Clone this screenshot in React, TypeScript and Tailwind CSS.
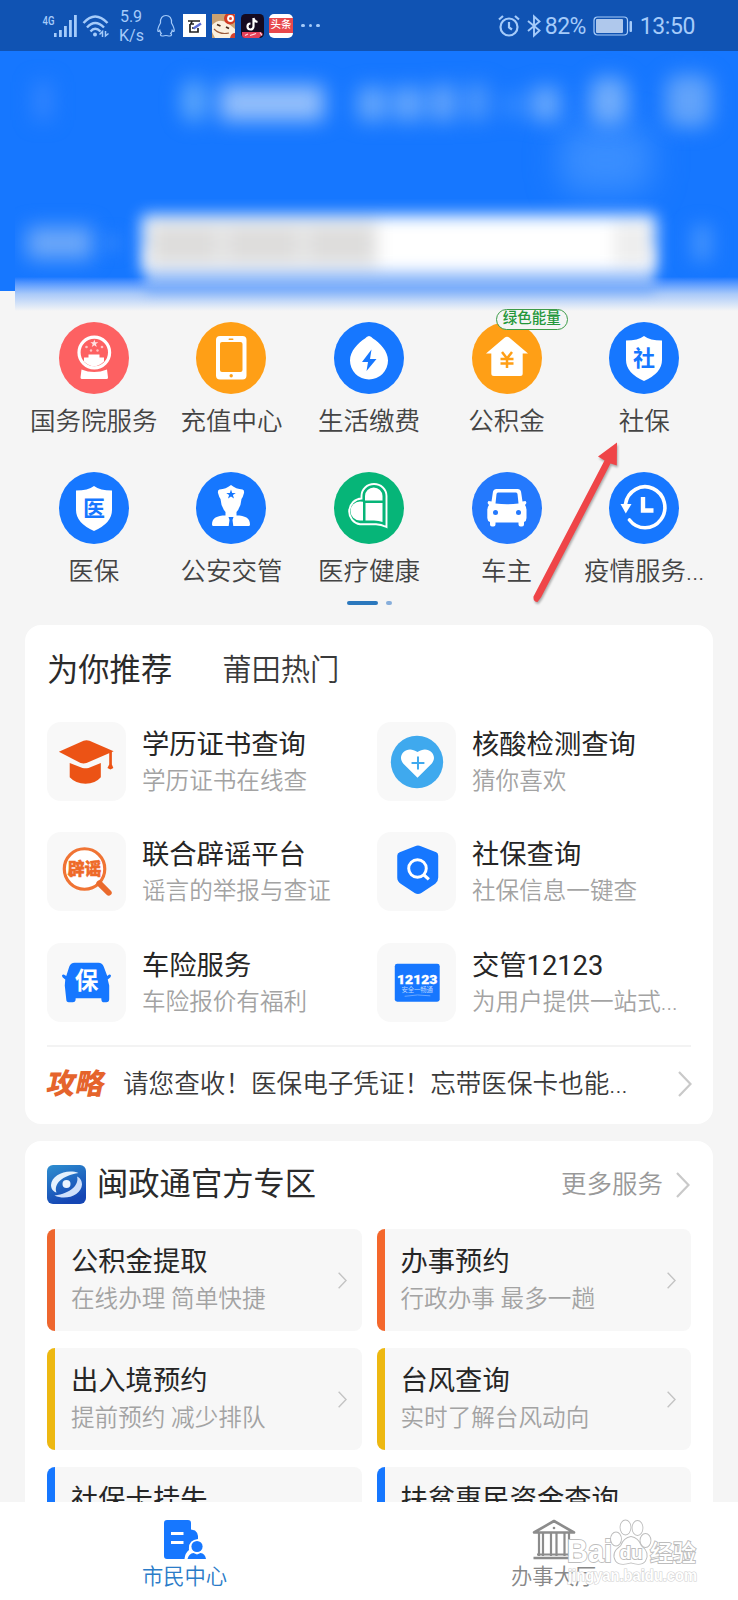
import type { ReactNode } from "react";
import clsx from "clsx";

const BLUE = "#1677ff";

/* ---------- status bar ---------- */

function StatusBar() {
  return (
    <div className="flex h-[51px] shrink-0 items-center bg-[#1053b3] font-['Roboto','Noto_Sans_CJK_SC',sans-serif] text-[#a5cbfa]">
      <svg className="ml-[42px] h-[24px] w-[36px] shrink-0 overflow-visible" viewBox="0 0 36 24" fill="currentColor">
        <text x="0.500" y="11" fontSize="13" fontWeight="500" textLength="12" lengthAdjust="spacingAndGlyphs">
          4G
        </text>
        <rect x="12" y="19" width="2.6" height="4" />
        <rect x="17" y="16" width="2.8" height="7" />
        <rect x="22" y="12" width="2.8" height="11" />
        <rect x="27" y="6" width="2.8" height="17" />
        <rect x="32" y="1" width="2.8" height="22" />
      </svg>
      <svg className="ml-[4px] h-[24px] w-[28px] shrink-0" viewBox="0 0 28 24" fill="none" stroke="currentColor" strokeWidth="2.4">
        <path d="M1.500 9Q13-4 25.500 9" />
        <path d="M5 13.500Q13 4.500 22 13.500" />
        <path d="M8.500 17.500Q13 12 18.500 17.500" />
        <circle cx="13" cy="20.500" r="2" fill="currentColor" stroke="none" />
        <path d="M17.500 20.500 20.500 17.500V23M26.500 19.500 23.500 22V17" strokeWidth="1.500" />
      </svg>
      <div className="ml-[9px] w-[24px] text-center text-[16px] leading-[19px] font-normal">
        <div>5.9</div>
        <div>K/s</div>
      </div>
      <svg className="ml-[13px] h-[24px] w-[20px] shrink-0" viewBox="0 0 20 24" fill="none" stroke="currentColor" strokeWidth="1.200">
        <path d="M4.500 9C4 4 6.500 1.500 10 1.500S16 4 15.500 9c1.500 2.500 3 5 2.700 8-.5 1-1.500 0-2-.7-.3 1.500-.8 2.400-1.500 3.200 1.500.8 1 2.500-1 2.500-1.500 0-2.500-.5-3.700-.5s-2.200.5-3.700.5c-2 0-2.500-1.700-1-2.500-.7-.8-1.200-1.700-1.500-3.200-.5.7-1.500 1.700-2 .7-.3-3 1.200-5.500 2.700-8Z" />
      </svg>
      <div className="ml-[7px] flex h-[23px] w-[23px] shrink-0 items-center justify-center bg-white">
        <svg className="h-[14px] w-[15px]" viewBox="0 0 15 14" fill="none" stroke="#222" strokeWidth="1.700">
          <path d="M1 2h12M5 2 4 5M3 5v8h8V9M3 5h4M5 9h3" />
          <path d="M6.500 9.500 14 4.500" stroke="#5d6fd8" strokeWidth="2.500" />
        </svg>
      </div>
      <svg className="ml-[6px] h-[24px] w-[23px] shrink-0" viewBox="0 0 23 24">
        <rect width="23" height="24" fill="#c9a172" />
        <path d="M0 11Q8 3 17 10l6 5v9H3L0 18Z" fill="#fbf1df" />
        <circle cx="18" cy="4.500" r="6" fill="#d33d24" />
        <circle cx="18.500" cy="4.500" r="3.400" fill="#fff" />
        <circle cx="18.500" cy="4.500" r="1.500" fill="#e0452e" />
        <path d="M5 10.500 8.500 12M14 13l3 1.500" stroke="#4b2d1b" strokeWidth="1.800" />
        <path d="M2 15Q8 21 17 19" stroke="#9b5c3c" strokeWidth="1.200" fill="none" />
        <path d="M18 24q1-5 5-5v5Z" fill="#d8432c" />
      </svg>
      <svg className="ml-[6px] h-[24px] w-[23px] shrink-0" viewBox="0 0 23 24">
        <rect width="23" height="24" rx="4.500" fill="#150a20" />
        <path d="M12.500 4v8.500a3 3 0 1 1-3-3M12.500 4q.5 3.500 4 4" fill="none" stroke="#fff" strokeWidth="2.200" />
        <path d="M1 18h19l2 2-4 4H4q-3 0-3-3Z" fill="#e4405a" />
        <path d="M4 21.500l3-1.500M9 21.500l6-2M19 18.500l2 3" stroke="#ffd9df" strokeWidth="1.200" />
      </svg>
      <div className="ml-[5px] flex h-[24px] w-[24px] shrink-0 items-center justify-center rounded-[5px] bg-white">
        <div className="flex h-[15px] w-full items-center justify-center bg-[#e8484c] text-[10.5px] leading-none font-medium text-white">
          头条
        </div>
      </div>
      <div className="ml-[8px] flex gap-[4px]">
        <i className="h-[3.500px] w-[3.500px] rounded-full bg-[#a5cbfa]" />
        <i className="h-[3.500px] w-[3.500px] rounded-full bg-[#a5cbfa]" />
        <i className="h-[3.500px] w-[3.500px] rounded-full bg-[#a5cbfa]" />
      </div>

      <div className="ml-auto flex items-center pr-[43px]">
        <svg className="h-[24px] w-[22px]" viewBox="0 0 22 24" fill="none" stroke="currentColor" strokeWidth="2.200">
          <circle cx="11" cy="13" r="8.500" />
          <path d="M11 8v5.500l3 2M1 5.500 5 2M21 5.500 17 2" />
        </svg>
        <svg className="ml-[7px] h-[24px] w-[14px]" viewBox="0 0 14 24" fill="none" stroke="currentColor" strokeWidth="1.900">
          <path d="M1 7 12.500 16.500 7 21.500V2.500L12.500 7.500 1 17" />
        </svg>
        <span className="mt-[2px] ml-[4px] w-[42px] text-[23px] leading-none tracking-[-0.5px]">82%</span>
        <svg className="ml-[6px] h-[20px] w-[40px]" viewBox="0 0 40 20">
          <rect x="1" y="1" width="33.500" height="18" rx="3.500" fill="none" stroke="currentColor" strokeWidth="1.200" />
          <rect x="3" y="3" width="27" height="14" rx="1" fill="#afc8ec" />
          <rect x="36.500" y="5" width="2.500" height="11" rx="1" fill="currentColor" />
        </svg>
        <span className="mt-[2px] ml-[7px] text-[23px] leading-none tracking-[-0.4px]">13:50</span>
      </div>
    </div>
  );
}

/* ---------- frosted header ---------- */

function Header() {
  return (
    <header className="relative h-[240px] shrink-0 bg-[#1677ff]">
      <div className="absolute top-[76px] left-[560px] h-[66px] w-[92px] rounded-[20px] bg-[#3a8eff] blur-[16px]" />
      <div className="relative flex h-[100px] items-center blur-[10px]">
        <i className="ml-[34px] h-[38px] w-[18px] bg-[#3486ff]" />
        <i className="ml-[130px] h-[42px] w-[24px] rounded-full bg-[#5fa8fb]" />
        <i className="ml-[14px] mt-[4px] h-[36px] w-[104px] bg-[#94bffb]" />
        <i className="ml-[34px] mt-[6px] h-[34px] w-[28px] bg-[#66a7fc]" />
        <i className="ml-[8px] mt-[6px] h-[34px] w-[28px] bg-[#66a7fc]" />
        <i className="ml-[8px] mt-[4px] h-[36px] w-[26px] bg-[#62a3fb]" />
        <i className="ml-[10px] mt-[2px] h-[36px] w-[22px] bg-[#4f98fb]" />
        <i className="ml-[14px] mt-[8px] h-[24px] w-[24px] bg-[#3389ff]" />
        <i className="ml-[6px] mt-[6px] h-[34px] w-[28px] bg-[#69a8fc]" />
        <i className="ml-[30px] h-[48px] w-[38px] rounded-[14px] bg-[#70acfb]" />
        <i className="ml-[38px] h-[52px] w-[46px] rounded-[12px] bg-[#62a3fa]" />
      </div>
      {/* glow where the header melts into the page */}
      <div className="absolute top-[226px] left-[15px] h-[34px] w-[723px] bg-gradient-to-b from-[#1677ff] via-[#a9c9f9] via-50% to-[#f5f5f5]" />
      <div className="absolute top-[196px] left-[146px] h-[46px] w-[508px] bg-[#7fb0fa] blur-[6px]" />
      <div className="absolute top-[148px] left-[15px] flex h-[88px] w-[723px] items-center overflow-hidden">
        <i className="ml-[12px] h-[32px] w-[66px] shrink-0 bg-[#6da8f9] blur-[10px]" />
        <i className="ml-[12px] h-[16px] w-[14px] shrink-0 bg-[#3386fb] blur-[8px]" />
        <div className="mt-[2px] ml-[23px] flex h-[58px] w-[514px] shrink-0 items-center rounded-[4px] bg-white blur-[8px]">
          <div className="ml-[6px] flex h-[48px] w-[230px] items-center justify-around bg-[#e6e6e6]">
            <i className="h-[28px] w-[60px] bg-[#dddcdb]" />
            <i className="h-[28px] w-[66px] bg-[#dddcdb]" />
            <i className="h-[28px] w-[60px] bg-[#dddcdb]" />
          </div>
          <i className="mr-[4px] ml-auto h-[42px] w-[38px] bg-[#eeeeee]" />
        </div>
        <i className="ml-[36px] h-[36px] w-[20px] shrink-0 bg-[#4292fd] blur-[9px]" />
      </div>
    </header>
  );
}

/* ---------- service grid ---------- */

function Shield({ char }: { char: string }) {
  return (
    <>
      <path d="M35 14Q41 18.500 53 18.500V38Q53 51 35 59 17 51 17 38V18.500Q29 18.500 35 14Z" fill="#fff" />
      <text x="35" y="44" textAnchor="middle" fontSize="22" fontWeight="700" fill={BLUE}>
        {char}
      </text>
    </>
  );
}

const services: { label: string; color: string; tag?: string; icon: ReactNode }[] = [
  {
    label: "国务院服务",
    color: "bg-[#fd6162]",
    icon: (
      <>
        <circle cx="35.300" cy="30.500" r="15.300" fill="none" stroke="#fff" strokeWidth="3.200" />
        <path d="M25 39.500v-4h4.500v-3h11v3H45v4Q35 49 25 39.500Z" fill="#fff" />
        <path d="m35.300 17.500 1 2.800h3l-2.400 1.800.9 2.900-2.500-1.700-2.500 1.700.9-2.900-2.400-1.800h3Z" fill="#ffe3e3" />
        <g fill="#ffc4c4">
          <circle cx="27.500" cy="25" r="1.300" />
          <circle cx="43" cy="25" r="1.300" />
          <circle cx="32" cy="28.500" r="1.200" />
          <circle cx="38.500" cy="28.500" r="1.200" />
        </g>
        <path d="M22.500 47.500Q35 52.500 48 47.500L49 55.500Q49 57 47.500 57H23Q21.500 57 21.500 55.500Z" fill="#fff" />
      </>
    ),
  },
  {
    label: "充值中心",
    color: "bg-[#ff9f16]",
    icon: (
      <>
        <path
          fillRule="evenodd"
          d="M24 14H46.500Q50.500 14 50.500 18V53.500Q50.500 57.500 46.500 57.500H24Q20 57.500 20 53.500V18Q20 14 24 14ZM26 20Q24 20 24 22V48Q24 50 26 50H44.500Q46.500 50 46.500 48V22Q46.500 20 44.500 20Z"
          fill="#fff"
        />
        <rect x="32.500" y="16.400" width="5" height="1.600" rx=".8" fill="#ff9f16" />
        <circle cx="35.200" cy="53.700" r="1.700" fill="#ff9f16" />
      </>
    ),
  },
  {
    label: "生活缴费",
    color: "bg-[#1677ff]",
    icon: (
      <>
        <path d="M35 14Q37 14 39 16.500C46 21 54 29 54 38.500A19 19 0 0 1 16 38.500C16 29 24 21 31 16.500Q33 14 35 14Z" fill="#fff" />
        <path d="M37.500 27.500 28 40H34L32.500 49 42.500 37H36Z" fill={BLUE} />
      </>
    ),
  },
  {
    label: "公积金",
    color: "bg-[#ff9f16]",
    tag: "绿色能量",
    icon: (
      <>
        <path d="M32.500 15.800Q35 13.500 37.500 15.800L56 31.500H50.700V51.500Q50.700 54 48.200 54H21.800Q19.300 54 19.300 51.500V31.500H14Z" fill="#fff" />
        <path d="M30 30 35 36.500 40 30M35 36V46M28.500 37H41.500M28.500 41.500H41.500" fill="none" stroke="#ff9f16" strokeWidth="2.500" />
      </>
    ),
  },
  { label: "社保", color: "bg-[#1677ff]", icon: <Shield char="社" /> },
  { label: "医保", color: "bg-[#1677ff]", icon: <Shield char="医" /> },
  {
    label: "公安交管",
    color: "bg-[#1677ff]",
    icon: (
      <>
        <path d="M35 13Q40 17 46.500 17.500 48.500 18 48 21 47 25 45.500 27 45 35 40.500 40V43.500C49 43.500 54 46 54 52.500Q54 54 52.500 54H17.500Q16 54 16 52.500C16 46 21 43.500 29.500 43.500V40Q25 35 24.500 27 23 25 22 21 21.500 18 23.500 17.500 30 17 35 13Z" fill="#fff" />
        <path d="m35 17.500 1.200 3.400h3.600l-2.900 2.200 1.100 3.500-3-2.100-3 2.100 1.100-3.500-2.900-2.200h3.600Z" fill={BLUE} />
        <path d="M32.500 45h5l-1 3 .8 6h-4.600l.8-6Z" fill={BLUE} />
      </>
    ),
  },
  {
    label: "医疗健康",
    color: "bg-[#06b578]",
    icon: (
      <g fill="none" stroke="#fff">
        {/* lying pill behind, upright pill in front */}
        <path d="M27.500 26.500V24A12.500 12 0 0 1 52.500 24V55Q47 52.500 42 52.300H26A13 13 0 0 1 27.500 26.500Z" strokeWidth="1.900" />
        <path d="M31 28.500V24A8.700 8.500 0 0 1 48.500 24V28.500ZM31.500 31H48.500V50Q45 48.500 40 48.500H31.500Z" fill="#fff" stroke="none" />
        <path d="M29 29.800V48.500H26A9.500 9.500 0 0 1 26 29.500Z" fill="#fff" stroke="none" />
      </g>
    ),
  },
  {
    label: "车主",
    color: "bg-[#2479fd]",
    icon: (
      <>
        <path
          fillRule="evenodd"
          d="M24 17H46Q48.500 17 49 19.500L50.500 29.500 53.500 29Q55.500 31 53 33 54.500 35 54.500 38V46Q54.500 49 52 50V52.500Q52 54.500 50 54.500H48.500Q46.500 54.500 46.500 52.500V50.500H23.500V52.500Q23.500 54.500 21.500 54.500H20Q18 54.500 18 52.500V50Q15.300 49 15.300 46V38Q15.300 35 17 33 14.500 31 16.500 29L19.500 29.500 21 19.500Q21.500 17 24 17ZM26 20.500Q24.700 20.500 24.500 22L23.500 31.500Q35 33 46.500 31.500L45.500 22Q45.300 20.500 44 20.500Z"
          fill="#fff"
        />
        <circle cx="23.500" cy="40.500" r="2.500" fill="#2479fd" />
        <circle cx="46.500" cy="40.500" r="2.500" fill="#2479fd" />
      </>
    ),
  },
  {
    label: "疫情服务...",
    color: "bg-[#1677ff]",
    icon: (
      <>
        <path d="M16.500 32A19.800 20.500 0 1 1 20.500 48" fill="none" stroke="#fff" strokeWidth="3.600" strokeLinecap="round" />
        <path d="M11.500 32H22.500L16.800 41.500Z" fill="#fff" />
        <path d="M34 25V38.500H44.500" fill="none" stroke="#fff" strokeWidth="4.400" />
      </>
    ),
  },
];

function ServiceGrid() {
  return (
    <section className="px-[25px] pt-[31px]">
      <div className="grid grid-cols-5">
        {services.map(({ label, color, tag, icon }) => (
          <div key={label} className="relative flex h-[150px] flex-col items-center">
            <div className={clsx("h-[72px] w-[70px] rounded-[50%]", color)}>
              <svg className="h-[72px] w-[70px]" viewBox="0 0 70 72">
                {icon}
              </svg>
            </div>
            {tag && (
              <span className="absolute top-[-13px] left-[58px] flex h-[21px] w-[72px] items-center justify-center rounded-full border border-[#3d9c48] bg-[#f5f5f5] text-[14.5px] leading-none font-medium text-[#23973a]">
                {tag}
              </span>
            )}
            <span className="mt-[14px] text-[25.5px] leading-[26px] font-[350] whitespace-nowrap text-[#444]">
              {label}
            </span>
          </div>
        ))}
      </div>
      <div className="-mt-[21px] flex h-[4px] justify-center gap-[8px]">
        <i className="w-[31px] rounded-full bg-[#2b78bd]" />
        <i className="w-[6px] rounded-full bg-[#87aedb]" />
      </div>
    </section>
  );
}

function PointerArrow() {
  return (
    <svg className="absolute top-[430px] left-[520px] h-[185px] w-[110px] drop-shadow-[1px_2px_1px_rgba(0,0,0,0.3)]" viewBox="520 430 110 185">
      <path d="M617 442.500 598 456.500 604.500 460.500 533.500 596.500Q533 602 537.500 602L541 597.500 610.500 463.500 616.800 465.500Z" fill="#ef4548" />
    </svg>
  );
}

/* ---------- recommendations ---------- */

const recommendations: { title: string; desc: string; icon: ReactNode }[] = [
  {
    title: "学历证书查询",
    desc: "学历证书在线查",
    icon: (
      <g fill="#ec5315">
        <path d="M12 30 37 19Q40 18 43 19L67.500 29.500 40 41.500Q37 42.500 34 41.500Z" />
        <path d="M23 41.500 36 46.500Q39 47.300 42 46.500L54.500 41.500V56Q49 62.500 39 62.500T23 56Z" />
        <path d="M63 30h2.700v13l1.500 3.500-3 1.500-3-1.500L63 43Z" />
      </g>
    ),
  },
  {
    title: "核酸检测查询",
    desc: "猜你喜欢",
    icon: (
      <>
        <circle cx="40.500" cy="40.500" r="26.500" fill="#3fa9ee" />
        <path d="M41 56.500 26.500 42C19.500 33.500 30.500 22.500 41 30.500 51.500 22.500 62.500 33.500 55.500 42Z" fill="#fff" />
        <path d="M41.500 35V48M35 41.500H48" stroke="#3fa9ee" strokeWidth="2" />
      </>
    ),
  },
  {
    title: "联合辟谣平台",
    desc: "谣言的举报与查证",
    icon: (
      <>
        <circle cx="38" cy="37.500" r="20.500" fill="#fff" stroke="#f07434" strokeWidth="3.200" />
        <path d="M53 52 62.500 61.500" stroke="#ea6a2c" strokeWidth="6" strokeLinecap="round" />
        <text x="38" y="44" textAnchor="middle" fontSize="17" fontWeight="900" fill="#ee6a28" stroke="#ee6a28" strokeWidth=".5">
          辟谣
        </text>
      </>
    ),
  },
  {
    title: "社保查询",
    desc: "社保信息一键查",
    icon: (
      <>
        <path d="M38.500 14.500Q41.500 13 44.500 14.500L60 20.500Q62 21.500 62 24V46Q62 50 59 52.500L44.500 62Q41.500 63.500 38.500 62L24 52.500Q20.500 50 20.500 46V24Q20.500 21.500 23 20.500Z" fill={BLUE} />
        <circle cx="41" cy="37" r="8.900" fill="none" stroke="#fff" strokeWidth="3" />
        <path d="M47 43 52.500 48" stroke="#fff" strokeWidth="3.200" />
      </>
    ),
  },
  {
    title: "车险服务",
    desc: "车险报价有福利",
    icon: (
      <>
        <path d="M28 20H52Q56 20 57.500 24L61 33.500 63 32Q66 32 64 35L61.500 37 63 43V57Q63 60 60 60H57Q55 60 55 56H29V57Q29 60 26 60H22Q19.500 60 19.500 57L18 43 18.500 37 16 35Q14 32 17 32L19.500 33.500 22.500 24Q24 20 28 20Z" fill={BLUE} />
        <text x="40" y="46.500" textAnchor="middle" fontSize="24" fontWeight="700" fill="#fff">
          保
        </text>
      </>
    ),
  },
  {
    title: "交管12123",
    desc: "为用户提供一站式...",
    icon: (
      <>
        <rect x="18" y="21" width="45.500" height="38.500" rx="2.500" fill={BLUE} />
        <text x="40.700" y="41.500" textAnchor="middle" fontSize="13" fontWeight="900" fill="#fff" stroke="#fff" strokeWidth=".3" textLength="41" lengthAdjust="spacingAndGlyphs" className="font-['Roboto']">
          12123
        </text>
        <text x="40.700" y="50" textAnchor="middle" fontSize="6.500" fill="#b5d4ff" textLength="32">
          安全一畅通
        </text>
        <path d="M28 54Q41 51.500 54 53.500" stroke="#8dbcff" strokeWidth=".7" fill="none" />
      </>
    ),
  },
];

function RecommendCard() {
  return (
    <section className="mx-[25px] mt-[20px] h-[499px] rounded-[16px] bg-white px-[22px] pt-[30px]">
      <div className="flex h-[32px] items-center leading-none">
        <h2 className="text-[31.300px] font-normal text-[#2b2b2b]">为你推荐</h2>
        <h2 className="ml-[50px] text-[29.300px] font-[350] text-[#3a3a3a]">莆田热门</h2>
      </div>
      <div className="mt-[35px] grid grid-cols-[330px_1fr]">
        {recommendations.map(({ title, desc, icon }) => (
          <div key={title} className="flex h-[110.300px]">
            <div className="h-[79px] w-[79px] shrink-0 rounded-[14px] bg-[#f8f8f8]">
              <svg className="h-[79px] w-[79px]" viewBox="0 0 80 80">
                {icon}
              </svg>
            </div>
            <div className="ml-[16px] pt-[8px] whitespace-nowrap">
              <h3 className="text-[27.300px] leading-[30px] font-normal text-[#262626]">{title}</h3>
              <p className="mt-[8px] text-[23.600px] leading-[26px] font-[350] text-[#a3a3a3]">{desc}</p>
            </div>
          </div>
        ))}
      </div>
      <div className="-mt-[8px] flex h-[77px] items-center border-t-2 border-[#f3f3f3]">
        <span className="w-[58px] -skew-x-12 text-[29px] leading-none font-black text-[#e5642c]">攻略</span>
        <p className="ml-[18px] text-[25.600px] leading-none font-[350] whitespace-nowrap text-[#3a3a3a]">
          请您查收！医保电子凭证！忘带医保卡也能...
        </p>
        <Chevron className="-mr-[1px] ml-auto h-[26px] w-[14px] text-[#c9c9c9]" />
      </div>
    </section>
  );
}

function Chevron({ className }: { className?: string }) {
  return (
    <svg className={className} viewBox="0 0 14 26" fill="none" stroke="currentColor" strokeWidth="2.200">
      <path d="M1 1 12.500 13 1 25" />
    </svg>
  );
}

/* ---------- official zone ---------- */

const zoneItems = [
  { title: "公积金提取", desc: "在线办理 简单快捷", bar: "bg-[#ee662e]" },
  { title: "办事预约", desc: "行政办事 最多一趟", bar: "bg-[#f4672c]" },
  { title: "出入境预约", desc: "提前预约 减少排队", bar: "bg-[#edb811]" },
  { title: "台风查询", desc: "实时了解台风动向", bar: "bg-[#edb811]" },
  { title: "社保卡挂失", bar: "bg-[#1677ff]" },
  { title: "扶贫惠民资金查询", bar: "bg-[#1677ff]" },
];

function OfficialZone() {
  return (
    <section className="mx-[25px] mt-[17px] h-[480px] rounded-t-[16px] bg-white px-[22px] pt-[24px]">
      <div className="flex h-[39px] items-center leading-none">
        <svg className="h-[39px] w-[39px]" viewBox="0 0 39 39">
          <defs>
            <linearGradient id="zone" x1="0" y1="0" x2="0.400" y2="1">
              <stop offset="0" stopColor="#2e8fd0" />
              <stop offset="1" stopColor="#1546b4" />
            </linearGradient>
          </defs>
          <rect width="39" height="39" rx="6" fill="url(#zone)" />
          <path d="M31.500 8C20 3.500 4.500 10 4 20 4 24.500 7 27 9.500 27.500 6.500 19 15 10.500 31.500 8Z" fill="#e4f1fd" />
          <path d="M7.500 30.500C19 36 34.500 30 35 19.500 35 15 32.500 12.500 30 11.500 32.500 19.500 24 28.500 7.500 30.500Z" fill="#cfe0fb" />
          <circle cx="19.500" cy="19" r="4" fill="#eaf5ff" />
        </svg>
        <h2 className="ml-[11px] text-[31.300px] font-normal text-[#2b2b2b]">闽政通官方专区</h2>
        <span className="ml-auto text-[25.500px] font-[350] text-[#999]">更多服务</span>
        <Chevron className="mr-[1px] ml-[13px] h-[26px] w-[14px] text-[#c9c9c9]" />
      </div>
      <div className="mt-[25px] grid grid-cols-2 gap-x-[15px] gap-y-[17px]">
        {zoneItems.map(({ title, desc, bar }) => (
          <div key={title} className="flex h-[102px] overflow-hidden rounded-[8px] bg-[#f7f7f7]">
            <i className={clsx("w-[8px] shrink-0", bar)} />
            <div className="ml-[16px] pt-[18px] whitespace-nowrap">
              <h3 className="text-[27.300px] leading-[30px] font-normal text-[#262626]">{title}</h3>
              {desc && <p className="mt-[9px] text-[23.600px] leading-[26px] font-[350] text-[#a3a3a3]">{desc}</p>}
            </div>
            <Chevron className="mt-[43px] mr-[15px] ml-auto h-[17px] w-[9px] shrink-0 text-[#c4c4c4]" />
          </div>
        ))}
      </div>
    </section>
  );
}

/* ---------- bottom navigation ---------- */

function BottomNav() {
  return (
    <nav className="flex h-[98px] shrink-0 bg-white text-[21.300px] leading-[24px] font-[350]">
      <div className="flex w-1/2 flex-col items-center pt-[18px] text-[#2b7cc8]">
        <svg className="h-[40px] w-[42px]" viewBox="0 0 42 40">
          <path d="M3 0H24Q27 0 27 3V9.500L31 10.500Q34 13 34 16V19Q24 20 25 30 21 33 20.500 39H3Q0 39 0 36V3Q0 0 3 0Z" fill={BLUE} />
          <path d="M7 13.500H19.500M7 22.500H19.500" stroke="#fff" strokeWidth="3" />
          <circle cx="33" cy="26.500" r="5.600" fill={BLUE} />
          <path d="M23.500 39Q25 33.500 29.500 33L33 34.500 36.500 33Q41 33.500 42 39Z" fill={BLUE} />
        </svg>
        <span className="mt-[5px]">市民中心</span>
      </div>
      <div className="flex w-1/2 flex-col items-center pt-[17px] text-[#888]">
        <svg className="h-[41px] w-[44px]" viewBox="0 0 44 41" fill="none" stroke="#8c8c8c" strokeWidth="2.600">
          <path d="M22 2 42 13.500H2ZM1.500 39H42.500" strokeLinejoin="round" />
          <path d="M7 14V37M11 14V37M19 14V37M24.500 14V37M32.500 14V37M37 14V37M5 35.500H39" strokeWidth="2.200" />
          <circle cx="22" cy="9" r="1.300" fill="#8c8c8c" stroke="none" />
        </svg>
        <span className="mt-[5px]">办事大厅</span>
      </div>
    </nav>
  );
}

function Watermark() {
  return (
    <svg className="absolute top-[1515px] left-[562px] h-[75px] w-[145px]" viewBox="0 0 145 75" fill="#fff" stroke="#bdbdbd" strokeWidth="1.800" paintOrder="stroke">
      <text x="5" y="47" fontSize="31" fontWeight="700" textLength="45" lengthAdjust="spacingAndGlyphs" className="font-['Liberation_Sans']">
        Bai
      </text>
      <ellipse cx="54" cy="24" rx="5" ry="6.500" />
      <ellipse cx="63.500" cy="12.500" rx="5" ry="7" />
      <ellipse cx="75.500" cy="13" rx="5" ry="7" />
      <ellipse cx="83.500" cy="25.500" rx="5" ry="6.500" />
      <path d="M69 22Q76 23 79 31 88 38 83 46 79 51 69 47.500 58 51 54 46 49 38 59 31 62 23 69 22Z" />
      <text x="69" y="44" textAnchor="middle" fontSize="19" fontWeight="700" className="font-['Liberation_Sans']">
        du
      </text>
      <text x="88" y="46" fontSize="23" fontWeight="500" textLength="46" lengthAdjust="spacingAndGlyphs">
        经验
      </text>
      <text x="6" y="65.500" fontSize="16" fontWeight="700" strokeWidth="1.200" stroke="#d0d0d0" textLength="129" lengthAdjust="spacingAndGlyphs" className="font-['Liberation_Sans']">
        jingyan.baidu.com
      </text>
    </svg>
  );
}

export default function App() {
  return (
    <div className="relative flex h-[1600px] w-[738px] flex-col overflow-hidden bg-[#f5f5f5] font-['Roboto','Noto_Sans_CJK_SC',sans-serif]">
      <StatusBar />
      <Header />
      <main className="relative h-[1211px] shrink-0 overflow-hidden">
        <ServiceGrid />
        <RecommendCard />
        <OfficialZone />
      </main>
      <BottomNav />
      <PointerArrow />
      <Watermark />
    </div>
  );
}
